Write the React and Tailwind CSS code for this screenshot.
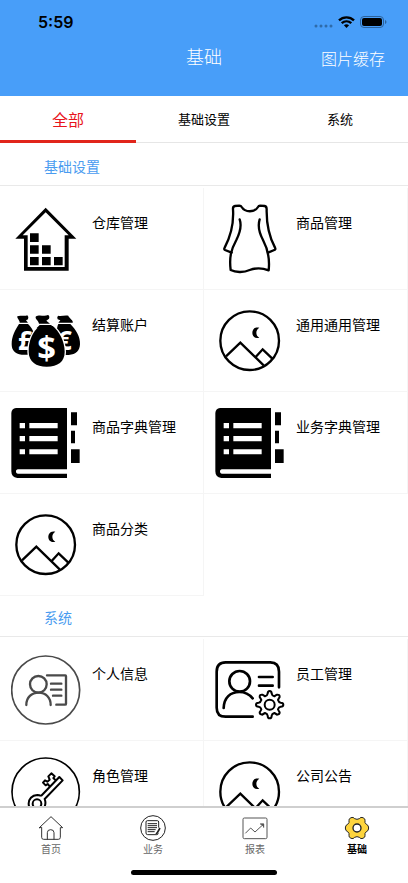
import { useState } from 'react';

function HouseIcon() {
  return (
    <svg viewBox="33 42 210 210" className="size-[70px] shrink-0" aria-hidden="true">
      <path
        fillRule="evenodd"
        d="M137 53L229 146H206V242H72V146H46ZM137 67L68 136H83V231H194V136H206Z"
      />
      <path d="M90 130h26v26h-26zM90 166h26v25h-26zM126 166h26v25h-26zM90 201h26v25h-26zM126 201h26v25h-26zM162 201h26v25h-26z" />
    </svg>
  );
}

function DressIcon() {
  return (
    <svg
      viewBox="33 42 210 210"
      className="size-[70px] shrink-0"
      fill="none"
      stroke="#000"
      strokeWidth="7"
      strokeLinecap="round"
      strokeLinejoin="round"
      aria-hidden="true"
    >
      <path d="M83 188L63 180Q59 178 62 173C81 137 90 105 87 58Q86 49 93 48L106 47Q111 47 113 51C123 68 152 68 162 51Q164 47 168 47L182 48Q188 49 188 58C187 105 194 137 213 173Q216 178 211 180L192 188" />
      <path d="M107 88C114 108 107 130 97 150C82 178 75 200 80 240C94 247 118 249 137 240C158 232 174 233 194 241C198 204 192 178 177 150C167 131 160 110 167 88" />
    </svg>
  );
}

function MoneyIcon() {
  return (
    <svg viewBox="33 42 210 210" className="size-[70px] shrink-0" aria-hidden="true">
      <path d="M59 92C60 86 50 78 52 73C60 68 72 74 82 70Q87 74 84 82L78 85L84 92ZM57 96H84C94 106 104 118 104 145V188H65C44 186 35 174 35 157C35 132 46 113 57 96Z" />
      <path d="M218 92C222 86 207 78 205 71C195 68 184 74 174 71Q170 76 173 82L181 85L175 92ZM175 96H211C228 113 241 134 240 157C239 176 229 188 206 189H172V145C170 118 170 106 175 96Z" />
      <text x="54" y="173" fontSize="78" fontWeight="700" fill="#fff" fontFamily="Open Sans, sans-serif">£</text>
      <text x="171" y="174" fontSize="78" fontWeight="700" fill="#fff" fontFamily="Open Sans, sans-serif">€</text>
      <path
        stroke="#fff"
        strokeWidth="8"
        paintOrder="stroke"
        d="M119 102C98 118 85 148 86 180C87 210 108 224 140 224C174 224 194 209 194 180C194 148 178 118 158 102Z"
      />
      <path d="M117 95C116 86 105 81 107 74C118 66 132 75 144 69Q150 72 147 80L139 86L150 95Z" />
      <path d="M119 99H153L164 108H110Z" />
      <text x="140" y="203" textAnchor="middle" fontSize="98" fontWeight="700" fill="#fff" fontFamily="Open Sans, sans-serif">$</text>
    </svg>
  );
}

function PictureIcon() {
  return (
    <svg viewBox="33 42 210 210" className="size-[70px] shrink-0" aria-hidden="true">
      <g fill="none" stroke="#000" strokeWidth="7">
        <circle cx="137" cy="146" r="88" />
        <path d="M66 193L109 152L179 220M155 195L176 172L205 200" />
      </g>
      <path d="M166 107C150 103 145 115 145 123C145 132 152 141 166 137C154 131 154 113 166 107Z" />
    </svg>
  );
}

function BookIcon() {
  return (
    <svg viewBox="33 42 210 210" className="size-[70px] shrink-0" aria-hidden="true">
      <path
        fillRule="evenodd"
        d="M48 42H201V226H54C46 226 46 239 54 239H201V252H52Q34 250 34 232V57Q35 44 48 42ZM59 87V103H75V87ZM88 87V103H173V87ZM59 126V142H75V126ZM88 126V142H173V126ZM59 166V181H75V166ZM88 166V181H173V166Z"
      />
      <path d="M213 55h18v39h-18zM213 110h12v38h-12zM213 166h26v41h-26z" />
    </svg>
  );
}

function ProfileIcon() {
  return (
    <svg
      viewBox="33 57 210 210"
      className="size-[70px] shrink-0"
      fill="none"
      stroke="#4a4a4a"
      strokeWidth="7"
      strokeLinecap="round"
      strokeLinejoin="round"
      aria-hidden="true"
    >
      <circle cx="137" cy="162" r="102" strokeWidth="5" />
      <circle cx="115" cy="145" r="25" />
      <path d="M79 207C79 184 95 170 116 170C137 170 152 184 152 207M141 118H196Q198 118 198 121V203Q198 206 195 206H169M153 143H184M153 161H184M159 179H184" />
    </svg>
  );
}

function StaffIcon() {
  return (
    <svg
      viewBox="33 57 210 210"
      className="size-[70px] shrink-0"
      fill="none"
      stroke="#000"
      strokeWidth="8"
      strokeLinecap="round"
      strokeLinejoin="round"
      aria-hidden="true"
    >
      <path d="M225 154V107Q225 79 199 79H65Q38 79 38 107V215Q38 242 65 242H146" />
      <circle cx="107" cy="136" r="31" />
      <path d="M59 216C60 185 79 168 106 168C123 168 136 175 146 187M165 123H206M165 149H206" />
      <circle cx="197" cy="206" r="15" strokeWidth="6" />
      <path
        strokeWidth="6"
        d="M191 173Q191 165 197 165Q203 165 203 173Q204 179 211 181Q215 178 219 176Q227 175 227 183Q224 188 222 192Q224 199 230 200Q238 200 238 206Q238 212 230 212Q224 213 222 220Q224 224 227 229Q227 236 219 236Q215 233 211 231Q204 233 203 239Q203 247 197 247Q191 247 191 239Q190 233 183 231Q179 233 175 236Q167 236 167 229Q170 224 172 220Q170 213 164 212Q156 212 156 206Q156 200 164 200Q170 199 172 192Q170 188 167 183Q167 175 175 176Q179 178 183 181Q190 179 191 173Z"
      />
    </svg>
  );
}

function KeyIcon() {
  return (
    <svg
      viewBox="33 51 210 210"
      className="size-[70px] shrink-0"
      fill="none"
      stroke="#000"
      strokeWidth="6"
      strokeLinejoin="round"
      aria-hidden="true"
    >
      <circle cx="137" cy="155" r="101" strokeWidth="5" />
      <circle cx="111" cy="191" r="13" />
      <path d="M123 168L178 111L188 121L134 177C140 192 133 216 111 217C77 214 78 166 112 165Q118 165 123 168" />
      <path d="M150 140L143 132L137 136L129 128L135 121L142 125L149 119L145 109L154 100L164 109L160 114L168 122" />
    </svg>
  );
}

function HomeIcon() {
  return (
    <svg viewBox="115 223 78 78" className="size-[26px]" fill="none" stroke="#333" strokeWidth="3" strokeLinejoin="round" strokeLinecap="round" aria-hidden="true">
      <path d="M119 261L154 228L189 261H182V290Q182 296 176 296H132Q126 296 126 290V261ZM143 296V276Q143 267 153 267Q163 267 163 276V296" />
    </svg>
  );
}

function BusinessIcon() {
  return (
    <svg viewBox="420 224 78 78" className="size-[26px]" fill="none" stroke="#222" strokeWidth="3" aria-hidden="true">
      <circle cx="459" cy="263" r="37" />
      <path d="M476 262V245Q476 241 472 241H442Q438 241 438 245V278Q438 283 443 283H470Q474 283 475 279M443 250H471M443 256H471M443 262H471M443 268H467M443 274H464" />
      <path d="M480 263L472 277L468 281" strokeWidth="5" />
    </svg>
  );
}

function ReportIcon() {
  return (
    <svg viewBox="114 224 78 78" className="size-[26px]" fill="none" stroke="#555" strokeWidth="3" aria-hidden="true">
      <rect x="117" y="233" width="72" height="62" rx="4" />
      <path d="M124 279L140 263L153 275L178 252M168 251H179V262" />
      <path d="M169 250H180V261Z" fill="#555" stroke="none" />
    </svg>
  );
}

function GearIcon() {
  return (
    <svg viewBox="417 224 78 78" className="size-[26px]" fill="#fdd43d" stroke="#222" strokeWidth="3" strokeLinejoin="round" aria-hidden="true">
      <path d="M438 232Q445 229 449 235Q456 239 463 235Q467 229 474 232Q482 236 480 241Q478 247 484 252Q491 254 491 263Q491 272 484 274Q478 279 480 285Q482 290 474 294Q467 297 463 291Q456 287 449 291Q445 297 438 294Q430 290 432 285Q434 279 428 274Q421 272 421 263Q421 254 428 252Q434 247 432 241Q430 236 438 232Z" />
      <circle cx="456" cy="263" r="12" fill="#fff" strokeWidth="4" />
    </svg>
  );
}

const tabs = ['全部', '基础设置', '系统'];

const sections = [
  {
    title: '基础设置',
    items: [
      { label: '仓库管理', Icon: HouseIcon },
      { label: '商品管理', Icon: DressIcon },
      { label: '结算账户', Icon: MoneyIcon },
      { label: '通用通用管理', Icon: PictureIcon },
      { label: '商品字典管理', Icon: BookIcon },
      { label: '业务字典管理', Icon: BookIcon },
      { label: '商品分类', Icon: PictureIcon },
    ],
  },
  {
    title: '系统',
    items: [
      { label: '个人信息', Icon: ProfileIcon },
      { label: '员工管理', Icon: StaffIcon },
      { label: '角色管理', Icon: KeyIcon },
      { label: '公司公告', Icon: PictureIcon },
    ],
  },
];

const navItems = [
  { label: '首页', Icon: HomeIcon },
  { label: '业务', Icon: BusinessIcon },
  { label: '报表', Icon: ReportIcon },
  { label: '基础', Icon: GearIcon },
];

function StatusBar() {
  return (
    <div className="flex h-11 items-center justify-between pl-[38px] pr-[21px] text-black">
      <span className="font-['Inter'] text-base font-semibold">5:59</span>
      <div className="flex items-center gap-[5px]">
        <svg viewBox="0 0 19 12" className="h-3 w-[19px]" fill="#2f6ba9" aria-hidden="true">
          <circle cx="2" cy="10" r="1.5" />
          <circle cx="7" cy="10" r="1.5" />
          <circle cx="12" cy="10" r="1.5" />
          <circle cx="17" cy="10" r="1.5" />
        </svg>
        <svg viewBox="0 0 17 12" className="h-3 w-[17px]" fill="none" stroke="#000" strokeWidth="2.4" aria-hidden="true">
          <path d="M1 4.4C5.2 .3 11.8 .3 16 4.4M3.7 7.2C6.5 4.7 10.5 4.7 13.3 7.2" />
          <path d="M8.5 12L5.9 9.3Q8.5 7.2 11.1 9.3Z" fill="#000" stroke="none" />
        </svg>
        <svg viewBox="0 0 27 12" className="h-3 w-[27px]" aria-hidden="true">
          <rect x=".5" y=".5" width="23" height="11" rx="3.5" fill="none" stroke="#2c629b" />
          <rect x="2" y="2" width="20" height="8" rx="2" />
          <path d="M25 4Q26.5 4.5 26.5 6Q26.5 7.5 25 8Z" fill="#2c629b" />
        </svg>
      </div>
    </div>
  );
}

export default function App() {
  const [tab, setTab] = useState('全部');
  const [page, setPage] = useState('基础');

  return (
    <div className="flex h-screen flex-col overflow-hidden bg-white font-['Liberation_Sans','Noto_Sans_CJK_SC',sans-serif] text-black">
      <header className="bg-[#489ef9] pb-6 font-light text-white">
        <StatusBar />
        <div className="grid grid-cols-3 items-center">
          <h1 className="col-start-2 text-center text-lg leading-7 font-light">基础</h1>
          <button type="button" className="pr-[23px] pt-1 text-right text-base">
            图片缓存
          </button>
        </div>
      </header>

      <div className="grid grid-cols-3" role="tablist">
        {tabs.map((name) => (
          <button
            key={name}
            type="button"
            role="tab"
            aria-selected={tab === name}
            onClick={() => setTab(name)}
            className={
              tab === name
                ? 'h-[47px] border-b-3 border-[#e1251b] pt-[5px] text-base text-[#e8141c]'
                : 'h-[47px] border-b border-[#e6e6e6] pt-0.5 text-[13px]'
            }
          >
            {name}
          </button>
        ))}
      </div>

      <main className="min-h-0 flex-1 overflow-hidden pt-0.5">
        {sections
          .filter((section) => tab === '全部' || tab === section.title)
          .map((section) => (
            <section key={section.title}>
              <h2 className="border-b border-[#e9e9e9] pb-2 pl-11 pt-3 text-sm text-[#4a9cf0]">
                {section.title}
              </h2>
              <div className="grid grid-cols-2 pt-0.5">
                {section.items.map(({ label, Icon }) => (
                  <button
                    key={label}
                    type="button"
                    className="flex items-start gap-[11px] border-b border-r border-[#f5f5f5] pb-[15px] pl-[11px] pt-4 text-left"
                  >
                    <Icon />
                    <span className="pt-[7px] text-sm leading-6">{label}</span>
                  </button>
                ))}
              </div>
            </section>
          ))}
      </main>

      <nav className="border-t-2 border-[#cfcfcf] bg-white">
        <div className="grid grid-cols-4 pt-[7px]">
          {navItems.map(({ label, Icon }) => (
            <button
              key={label}
              type="button"
              onClick={() => setPage(label)}
              className={
                page === label
                  ? 'flex flex-col items-center text-[10px] leading-[18px] font-bold text-black'
                  : 'flex flex-col items-center text-[10px] leading-[18px] text-[#666]'
              }
            >
              <Icon />
              {label}
            </button>
          ))}
        </div>
        <div className="mx-auto mb-2 mt-[11px] h-[5px] w-[146px] rounded-full bg-black" />
      </nav>
    </div>
  );
}
